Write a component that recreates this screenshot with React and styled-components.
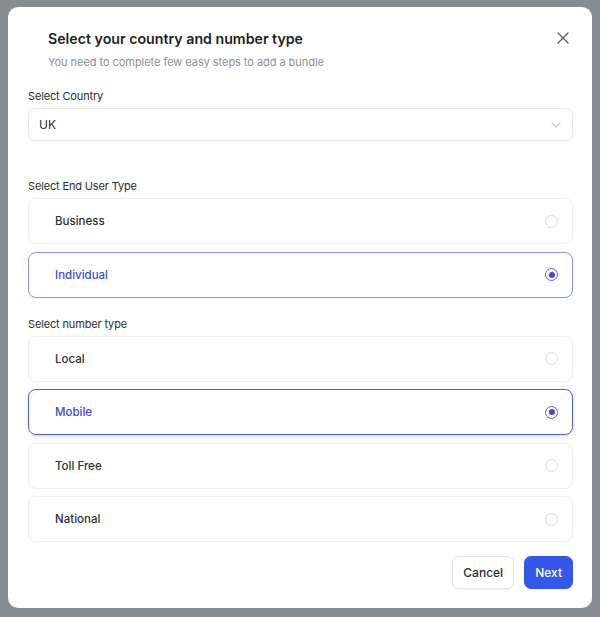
import React, { useState } from "react";
import styled, { createGlobalStyle } from "styled-components";

const GlobalStyle = createGlobalStyle`
  * { box-sizing: border-box; }
  body {
    margin: 0;
    font-family: Inter, "Noto Sans", sans-serif;
    color: #1f2328;
  }
`;

const Backdrop = styled.div`
  width: 600px;
  height: 617px;
  background: #878b94;
  padding: 7px 8px 9px 8px;
`;

const Modal = styled.div`
  background: #ffffff;
  border-radius: 10px;
  height: 100%;
  padding: 22px 19px 19px 20px;
  display: flex;
  flex-direction: column;
`;

const Header = styled.div`
  display: flex;
  justify-content: space-between;
  align-items: flex-start;
  padding-left: 20px;
`;

const Title = styled.h2`
  margin: 0;
  font-size: 14.2px;
  line-height: 20px;
  font-weight: 600;
  color: #1d1f23;
`;

const Subtitle = styled.p`
  margin: 5px 0 0;
  font-size: 11px;
  line-height: 16px;
  letter-spacing: -0.05px;
  color: #8a8f98;
`;

const CloseButton = styled.button`
  border: 0;
  background: none;
  padding: 0;
  margin: 3px 2px 0 0;
  width: 14px;
  height: 14px;
  cursor: pointer;
  color: #555a60;
  display: flex;
`;

const Section = styled.div`
  display: flex;
  flex-direction: column;
  gap: 4px;
  margin-top: ${(p) => p.$top}px;
`;

const Label = styled.div`
  font-size: 11px;
  line-height: 16px;
  letter-spacing: -0.15px;
  color: #2a2d33;
`;

const SelectBox = styled.div`
  height: 33px;
  border: 1px solid #e8e9ec;
  border-radius: 7px;
  display: flex;
  align-items: center;
  justify-content: space-between;
  padding: 0 11px 0 10px;
  font-size: 12px;
  color: #2a2d33;
  box-shadow: 0 1px 2px rgba(0, 0, 0, 0.04);
`;

const List = styled.div`
  display: flex;
  flex-direction: column;
  gap: 7.5px;
`;

const Option = styled.div`
  height: 46px;
  border-radius: 8px;
  border: ${(p) =>
    p.$state === "focus"
      ? "1.5px solid #4b5fe0"
      : p.$state === "selected"
      ? "1px solid #8794ee"
      : "1px solid #efeff2"};
  box-shadow: ${(p) =>
    p.$state === "focus" ? "0 1px 3px rgba(75, 95, 224, 0.25)" : "none"};
  display: flex;
  align-items: center;
  justify-content: space-between;
  padding: 0 14px 0 26px;
  font-size: 11.5px;
  font-weight: 500;
  color: ${(p) => (p.$state ? "#3b4dd4" : "#2b2e34")};
  cursor: pointer;
`;

const Radio = styled.span`
  width: 13px;
  height: 13px;
  border-radius: 50%;
  border: 1px solid ${(p) => (p.$on ? "#5466dc" : "#dcdde1")};
  display: flex;
  align-items: center;
  justify-content: center;

  &::after {
    content: "";
    width: 6px;
    height: 6px;
    border-radius: 50%;
    background: ${(p) => (p.$on ? "#3a4dd0" : "transparent")};
  }
`;

const Footer = styled.div`
  display: flex;
  justify-content: flex-end;
  gap: 10px;
  margin-top: 14px;
`;

const Button = styled.button`
  height: 33px;
  border-radius: 7px;
  font-family: inherit;
  font-size: 12px;
  font-weight: 500;
  padding: 0 10px;
  cursor: pointer;
  border: 1px solid ${(p) => (p.$primary ? "#3457ea" : "#e4e5e8")};
  background: ${(p) => (p.$primary ? "#3457ea" : "#ffffff")};
  color: ${(p) => (p.$primary ? "#ffffff" : "#2a2d33")};
  box-shadow: 0 1px 2px rgba(0, 0, 0, 0.05);
`;

const userTypes = ["Business", "Individual"];
const numberTypes = ["Local", "Mobile", "Toll Free", "National"];

const OptionGroup = ({ items, value, onChange, focusState }) => (
  <List>
    {items.map((item) => (
      <Option
        key={item}
        $state={item === value ? focusState : undefined}
        onClick={() => onChange(item)}
      >
        {item}
        <Radio $on={item === value} />
      </Option>
    ))}
  </List>
);

const App = () => {
  const [userType, setUserType] = useState("Individual");
  const [numberType, setNumberType] = useState("Mobile");

  return (
    <>
      <GlobalStyle />
      <Backdrop>
        <Modal>
          <Header>
            <div>
              <Title>Select your country and number type</Title>
              <Subtitle>You need to complete few easy steps to add a bundle</Subtitle>
            </div>
            <CloseButton aria-label="Close">
              <svg width="12" height="12" viewBox="0 0 12 12" fill="none">
                <path
                  d="M1 1L11 11M11 1L1 11"
                  stroke="currentColor"
                  strokeWidth="1.3"
                  strokeLinecap="round"
                />
              </svg>
            </CloseButton>
          </Header>

          <Section $top={18}>
            <Label>Select Country</Label>
            <SelectBox>
              UK
              <svg width="10" height="6" viewBox="0 0 10 6" fill="none">
                <path
                  d="M1 1L5 5L9 1"
                  stroke="#c4c6cb"
                  strokeWidth="1.1"
                  strokeLinecap="round"
                  strokeLinejoin="round"
                />
              </svg>
            </SelectBox>
          </Section>

          <Section $top={37}>
            <Label>Select End User Type</Label>
            <OptionGroup
              items={userTypes}
              value={userType}
              onChange={setUserType}
              focusState="selected"
            />
          </Section>

          <Section $top={18}>
            <Label>Select number type</Label>
            <OptionGroup
              items={numberTypes}
              value={numberType}
              onChange={setNumberType}
              focusState="focus"
            />
          </Section>

          <Footer>
            <Button>Cancel</Button>
            <Button $primary>Next</Button>
          </Footer>
        </Modal>
      </Backdrop>
    </>
  );
};

export default App;
